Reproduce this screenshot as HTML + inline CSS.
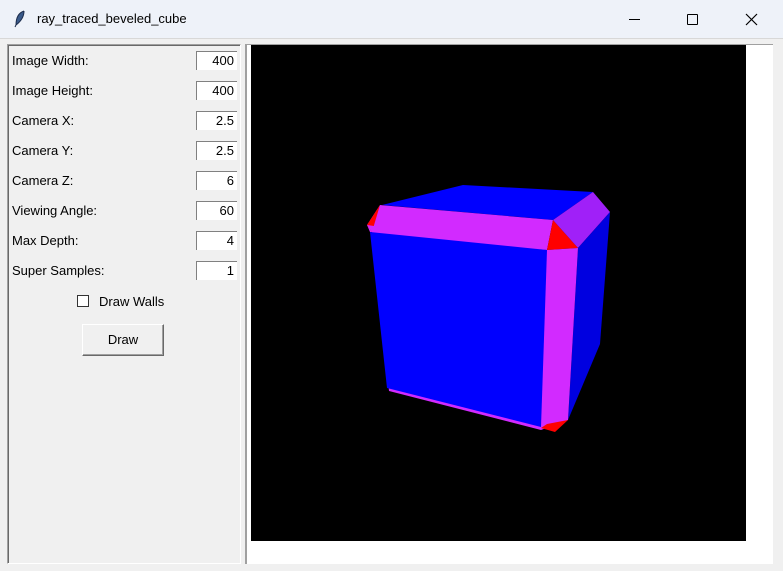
<!DOCTYPE html>
<html><head><style>
body{margin:0;width:783px;height:571px;overflow:hidden;background:#f0f0f0;font-family:"Liberation Sans",sans-serif;position:relative}
.title{position:absolute;left:0;top:0;width:783px;height:38px;background:#eef2f9;border-bottom:1px solid #d8d8d8}
.title span{position:absolute;left:37px;top:11px;font-size:13px;color:#000}
.panel{position:absolute;left:7px;top:44px;width:232px;height:518px;border:1px solid #a0a0a0;border-right-color:#fff;border-bottom-color:#fff;box-shadow:inset 1px 1px 0 #696969}
.lbl{position:absolute;left:12px;font-size:13px;color:#000}
.ent{position:absolute;left:196px;width:41px;height:19px;background:#fff;border-top:1px solid #808080;border-left:1px solid #808080;box-sizing:border-box;font-size:13px;text-align:right;padding-right:3px;line-height:18px}
.canvas{position:absolute;left:245px;top:44px;width:526px;height:519px;background:#fff;border-left:2px solid #a0a0a0;border-top:1px solid #a0a0a0}
</style></head><body>
<div class="title">
<svg style="position:absolute;left:14px;top:10px" width="12" height="18" viewBox="0 0 12 18"><path d="M10 1 C4 3 2 9 2 15 L1 17 M2 15 C6 12 10 7 10 1" fill="#3a5a8a" stroke="#1c2c4c" stroke-width="1"/></svg>
<span>ray_traced_beveled_cube</span>
<div style="position:absolute;left:629px;top:19px;width:11px;height:1px;background:#000"></div>
<div style="position:absolute;left:687px;top:14px;width:9px;height:9px;border:1px solid #000;border-radius:1px"></div>
<svg style="position:absolute;left:745px;top:13px" width="13" height="13"><path d="M1 1L12 12M12 1L1 12" stroke="#000" stroke-width="1.2"/></svg>
</div>
<div class="panel"></div>
<div class="lbl" style="top:53px">Image Width:</div><div class="ent" style="top:51px">400</div>
<div class="lbl" style="top:83px">Image Height:</div><div class="ent" style="top:81px">400</div>
<div class="lbl" style="top:113px">Camera X:</div><div class="ent" style="top:111px">2.5</div>
<div class="lbl" style="top:143px">Camera Y:</div><div class="ent" style="top:141px">2.5</div>
<div class="lbl" style="top:173px">Camera Z:</div><div class="ent" style="top:171px">6</div>
<div class="lbl" style="top:203px">Viewing Angle:</div><div class="ent" style="top:201px">60</div>
<div class="lbl" style="top:233px">Max Depth:</div><div class="ent" style="top:231px">4</div>
<div class="lbl" style="top:263px">Super Samples:</div><div class="ent" style="top:261px">1</div>
<div style="position:absolute;left:77px;top:295px;width:12px;height:12px;background:#fff;border:1px solid #333;box-sizing:border-box"></div>
<div class="lbl" style="left:99px;top:294px">Draw Walls</div>
<div style="position:absolute;left:82px;top:324px;width:82px;height:32px;box-sizing:border-box;border:1px solid #fff;border-right-color:#696969;border-bottom-color:#696969;box-shadow:inset -1px -1px 0 #a0a0a0;background:#f0f0f0;font-size:13px;text-align:center;line-height:30px">Draw</div>
<div class="canvas"></div>
<svg style="position:absolute;left:0;top:0" width="783" height="571">
<rect x="251" y="45" width="495" height="496" fill="#000"/>
<polygon points="382,205 463,185 593,192 553,220" fill="#0000ff"/>
<polygon points="367,225 380,205 553,220 547,250 370,232" fill="#d22aff"/>
<polygon points="367,225 380,205 372,232" fill="#ff0000"/>
<polygon points="553,220 547,250 578,248" fill="#ff0000"/>
<polygon points="593,192 610,212 578,248 553,220" fill="#a020f8"/>
<polygon points="610,212 600,344 568,420 578,248" fill="#0000e0"/>
<polygon points="367,225 372,232 389,391 541,430 568,420 578,248 547,250" fill="#d22aff"/>
<polygon points="370,232 547,250 541,427 387,388" fill="#0000ff"/>
<polygon points="541,428 555,432 568,420 547,424" fill="#ff0000"/>
</svg>
</body></html>
